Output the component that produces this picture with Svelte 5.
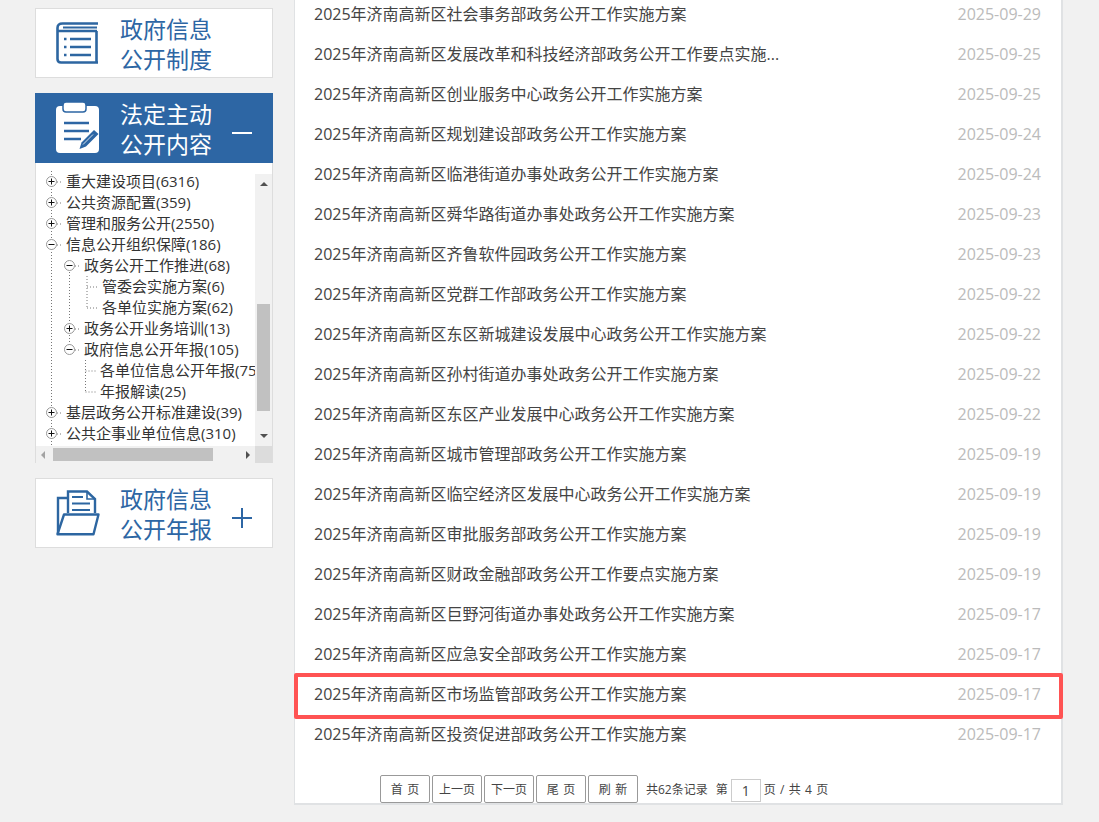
<script>
  const prefix = "2025年济南高新区";
  const items = [
    ["社会事务部政务公开工作实施方案", "2025-09-29"],
    ["发展改革和科技经济部政务公开工作要点实施...", "2025-09-25"],
    ["创业服务中心政务公开工作实施方案", "2025-09-25"],
    ["规划建设部政务公开工作实施方案", "2025-09-24"],
    ["临港街道办事处政务公开工作实施方案", "2025-09-24"],
    ["舜华路街道办事处政务公开工作实施方案", "2025-09-23"],
    ["齐鲁软件园政务公开工作实施方案", "2025-09-23"],
    ["党群工作部政务公开工作实施方案", "2025-09-22"],
    ["东区新城建设发展中心政务公开工作实施方案", "2025-09-22"],
    ["孙村街道办事处政务公开工作实施方案", "2025-09-22"],
    ["东区产业发展中心政务公开工作实施方案", "2025-09-22"],
    ["城市管理部政务公开工作实施方案", "2025-09-19"],
    ["临空经济区发展中心政务公开工作实施方案", "2025-09-19"],
    ["审批服务部政务公开工作实施方案", "2025-09-19"],
    ["财政金融部政务公开工作要点实施方案", "2025-09-19"],
    ["巨野河街道办事处政务公开工作实施方案", "2025-09-17"],
    ["应急安全部政务公开工作实施方案", "2025-09-17"],
    ["市场监管部政务公开工作实施方案", "2025-09-17", true],
    ["投资促进部政务公开工作实施方案", "2025-09-17"],
  ];

  const tree = [
    { cls: "l0", exp: "+", label: "重大建设项目(6316)" },
    { cls: "l0", exp: "+", label: "公共资源配置(359)" },
    { cls: "l0", exp: "+", label: "管理和服务公开(2550)" },
    { cls: "l0", exp: "-", label: "信息公开组织保障(186)" },
    { cls: "l1", exp: "-", label: "政务公开工作推进(68)" },
    { cls: "l2", label: "管委会实施方案(6)" },
    { cls: "l2", label: "各单位实施方案(62)" },
    { cls: "l1", exp: "+", label: "政务公开业务培训(13)" },
    { cls: "l1", exp: "-", label: "政府信息公开年报(105)" },
    { cls: "l2b", label: "各单位信息公开年报(75)" },
    { cls: "l2b", label: "年报解读(25)" },
    { cls: "l0", exp: "+", label: "基层政务公开标准建设(39)" },
    { cls: "l0", exp: "+", label: "公共企事业单位信息(310)" },
  ];

  const pagerButtons = ["首 页", "上一页", "下一页", "尾 页", "刷 新"];

  // dotted connectors, in the tree's own coordinates
  const connectors = [
    [15.5, 8, 15.5, 283],
    [33.5, 103, 33.5, 187],
    [51, 110, 51, 145],
    [49.5, 194, 49.5, 229],
    ...[19, 40, 61, 82, 250, 271].map((y) => [21, y, 27, y]),
    ...[103, 166, 187].map((y) => [39, y, 45, y]),
    [51, 124, 63, 124],
    [51, 145, 63, 145],
    [49.5, 208, 61, 208],
    [49.5, 229, 61, 229],
  ];
</script>

<div class="page">
  <aside class="side">
    <div class="card">
      <svg class="icon" width="42" height="42" viewBox="0 0 42 42" fill="none" stroke="#2d66a1">
        <path d="M42 1.5H6.5Q1.5 1.5 1.5 6V37Q1.5 40.5 5 40.5H42" stroke-width="2.6" />
        <path d="M40.5 9V41M2 9H41" stroke-width="2.6" />
        <path d="M7 5.5H41" stroke-width="2" />
        <path d="M14 17H35M14 25H35M14 33H35" stroke-width="2.4" />
        <path d="M8 17H10.5M8 25H10.5M8 33H10.5" stroke-width="2.4" />
      </svg>
      <div class="title">政府信息<br />公开制度</div>
    </div>

    <div class="group">
      <div class="card active">
        <svg class="icon" width="43" height="50" viewBox="0 0 43 50">
          <rect x="0" y="3" width="43" height="47" rx="4" fill="#fff" />
          <rect x="7" y="-1" width="23" height="10" rx="3" fill="#fff" stroke="#2d66a4" stroke-width="1.5" />
          <path d="M8 20H33M8 28H33M8 36H25" stroke="#2d66a4" stroke-width="2.6" fill="none" />
          <path d="M23.5 46L25.5 39.5L38 27L42.5 31L30 43.5Z" fill="#2d66a4" />
          <path d="M27 41.5L37 31.5" stroke="#fff" stroke-width="0.8" />
        </svg>
        <div class="title">法定主动<br />公开内容</div>
        <span class="toggle minus"></span>
      </div>

      <div class="tree-box">
        <div class="tree">
          <svg class="lines" width="219" height="283">
            {#each connectors as c}
              <line x1={c[0]} y1={c[1]} x2={c[2]} y2={c[3]} stroke="#777" stroke-dasharray="1 2" />
            {/each}
          </svg>
          {#each tree as node}
            <div class="node {node.cls}">
              {#if node.exp}
                <svg class="exp" width="13" height="13" viewBox="0 0 13 13">
                  <circle cx="6.5" cy="6.5" r="5" fill="#fff" stroke="#999" />
                  <path d="M3.5 6.5H9.5" stroke="#111" />
                  {#if node.exp === "+"}
                    <path d="M6.5 3.5V9.5" stroke="#111" />
                  {/if}
                </svg>
              {/if}
              <span class="label">{node.label}</span>
            </div>
          {/each}
        </div>

        <div class="vbar">
          <span class="arrow up"></span>
          <span class="vthumb"></span>
          <span class="arrow down"></span>
        </div>
        <div class="hbar">
          <span class="arrow left"></span>
          <span class="hthumb"></span>
          <span class="arrow right"></span>
        </div>
        <div class="corner"></div>
      </div>
    </div>

    <div class="card">
      <svg class="icon" width="44" height="46" viewBox="0 0 44 46" fill="none" stroke="#2d66a1" stroke-width="2.4">
        <path d="M2 44V8H11" />
        <path d="M12 23V1.5H31L39 9V23" />
        <path d="M31 1.5V9H39" stroke-width="1.6" />
        <path d="M16 7H27M16 13.5H34M16 20H34" stroke-width="2" />
        <path d="M8 24.5H42.5L37.5 44.2H1.5Z" stroke-linejoin="round" />
      </svg>
      <div class="title">政府信息<br />公开年报</div>
      <span class="toggle plus"></span>
    </div>
  </aside>

  <main class="panel">
    <ul class="list">
      {#each items as [text, date, marked]}
        <li class="row">
          <span class="name">{prefix}{text}</span>
          <span class="date">{date}</span>
          {#if marked}<span class="mark"></span>{/if}
        </li>
      {/each}
    </ul>

    <div class="pager">
      {#each pagerButtons as b}
        <button type="button">{b}</button>
      {/each}
      <span class="count">共62条记录</span>
      <span class="nth">第</span>
      <span class="pageno">1</span>
      <span class="total">页 / 共 4 页</span>
    </div>
  </main>
</div>

<style>
  :global(body) {
    background: #f1f1f1;
  }

  .page {
    display: grid;
    grid-template-columns: 238px 769px;
    column-gap: 21px;
    height: 822px;
    padding-left: 35px;
    overflow: hidden;
    font-family: "Open Sans", "Noto Sans CJK SC", sans-serif;
    color: #333;
  }

  /* left column */
  .side {
    display: flex;
    flex-direction: column;
    gap: 15px;
    padding-top: 8px;
  }

  .card {
    display: flex;
    align-items: center;
    position: relative;
    box-sizing: border-box;
    height: 70px;
    padding-left: 20px;
    background: #fff;
    border: 1px solid #ddd;
    color: #2d66a4;
  }

  .card.active {
    background: #2d66a4;
    border-color: #2d66a4;
    color: #fff;
  }

  .icon {
    flex: none;
    overflow: visible;
  }

  .title {
    position: absolute;
    left: 84px;
    top: 5px;
    font-size: 23px;
    line-height: 30px;
  }

  .toggle {
    position: absolute;
    left: 196px;
    top: 38px;
    width: 20px;
    height: 2px;
    background: currentColor;
  }

  .toggle.plus::after {
    content: "";
    position: absolute;
    left: 9px;
    top: -9px;
    width: 2px;
    height: 20px;
    background: currentColor;
  }

  /* tree with its scrollbars */
  .tree-box {
    display: grid;
    grid-template-columns: 219px 17px;
    grid-template-rows: 283px 17px;
    background: #fff;
    border-left: 1px solid #ddd;
    border-right: 1px solid #ddd;
  }

  .tree {
    position: relative;
    box-sizing: border-box;
    padding-top: 8px;
    overflow: hidden;
  }

  .lines {
    position: absolute;
    left: 0;
    top: 0;
  }

  .node {
    display: flex;
    align-items: center;
    position: relative;
    height: 21px;
    font-size: 15px;
    line-height: 21px;
    white-space: nowrap;
  }

  .node.l0 {
    padding-left: 9px;
  }
  .node.l1 {
    padding-left: 27px;
  }
  .node.l2 {
    padding-left: 66px;
  }
  .node.l2b {
    padding-left: 64px;
  }

  .exp {
    flex: none;
    margin-right: 8px;
  }

  .label {
    background: #fff;
  }

  .vbar {
    display: flex;
    flex-direction: column;
    align-items: center;
    position: relative;
    margin-top: 11px;
    background: #f1f1f1;
  }

  .vthumb {
    position: absolute;
    top: 130px;
    left: 2px;
    width: 13px;
    height: 107px;
    background: #c1c1c1;
  }

  .hbar {
    display: flex;
    align-items: center;
    position: relative;
    background: #f1f1f1;
  }

  .hthumb {
    position: absolute;
    left: 17px;
    top: 2px;
    width: 160px;
    height: 13px;
    background: #c1c1c1;
  }

  .corner {
    background: #dcdcdc;
  }

  .arrow {
    width: 0;
    height: 0;
    border: 4px solid transparent;
  }

  .arrow.up {
    margin-top: 4px;
    border-bottom-color: #505050;
  }

  .arrow.down {
    margin-top: auto;
    margin-bottom: 4px;
    border-top-color: #505050;
  }

  .arrow.left {
    margin-left: 1px;
    border-right-color: #a3a3a3;
  }

  .arrow.right {
    margin-left: auto;
    margin-right: 1px;
    border-left-color: #505050;
  }

  /* right panel */
  .panel {
    box-sizing: border-box;
    display: flex;
    flex-direction: column;
    height: 811px;
    margin-top: -6px;
    background: #fff;
    border: solid #e0e2e4;
    border-width: 0 2px 2px 1px;
  }

  .list {
    margin: 0;
    padding: 0;
    list-style: none;
  }

  .row {
    display: flex;
    align-items: center;
    justify-content: space-between;
    position: relative;
    height: 40px;
    padding: 0 20px 0 19px;
    font-size: 16px;
    color: #444;
  }

  .name {
    margin-bottom: 2px;
  }

  .date {
    color: #bbb;
  }

  .mark {
    position: absolute;
    left: -1px;
    right: -2px;
    top: -1px;
    height: 46px;
    box-sizing: border-box;
    border: 4px solid #ff5353;
    border-radius: 2px;
  }

  .pager {
    display: flex;
    align-items: center;
    margin-top: 21px;
    padding-left: 85px;
    font-size: 12px;
    word-spacing: 1.2px;
    color: #444;
  }

  .pager button {
    box-sizing: border-box;
    width: 50px;
    height: 28px;
    margin-right: 2px;
    padding: 0;
    background: #fff;
    border: 1px solid #999;
    border-radius: 2px;
    font: inherit;
    word-spacing: 1.5px;
    color: #444;
  }

  .count {
    margin-left: 6px;
  }

  .nth {
    margin-left: 8px;
  }

  .pageno {
    box-sizing: border-box;
    width: 30px;
    height: 23px;
    margin: 2px 3px 0 3px;
    border: 1px solid #ccc;
    font-size: 14px;
    line-height: 22px;
    text-align: center;
  }

  .total {
    white-space: nowrap;
  }
</style>
